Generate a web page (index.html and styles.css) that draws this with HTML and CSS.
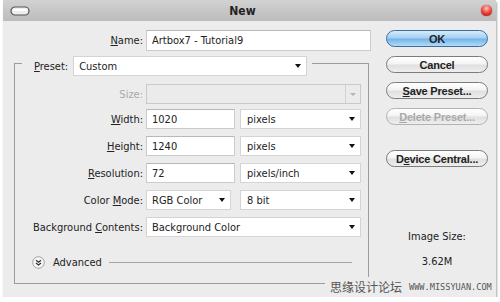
FILE: index.html
```html
<!DOCTYPE html>
<html lang="en">
<head>
  <meta charset="UTF-8">
  <title>New</title>
  <link rel="stylesheet" href="styles.css">
</head>
<body>
  <div class="window">
    <div class="titlebar">
      <svg class="pill" width="20" height="10" viewBox="0 0 20 10">
        <rect x="1" y="1" width="18" height="8" rx="4" fill="#eeeeee" stroke="#555" stroke-width="1.2"/>
        <rect x="3" y="3" width="14" height="2" rx="1" fill="#ffffff"/>
      </svg>
      <div class="title">New</div>
      <span class="close"></span>
    </div>

    <div class="content">
      <div class="main">
        <div class="name-row">
          <label class="lbl name-lbl"><u>N</u>ame:</label>
          <input class="field name-field" type="text" value="Artbox7 - Tutorial9">
        </div>

        <fieldset class="group">
          <legend class="preset">
            <label class="preset-lbl"><u>P</u>reset:</label>
            <div class="select preset-select"><span>Custom</span><i class="arrow"></i></div>
          </legend>

          <div class="row row-size">
            <label class="lbl disabled">Size:</label>
            <div class="select select-off"><span></span><i class="drop"><b></b></i></div>
          </div>
          <div class="row">
            <label class="lbl"><u>W</u>idth:</label>
            <input class="field num" type="text" value="1020">
            <div class="select unit"><span>pixels</span><i class="arrow"></i></div>
          </div>
          <div class="row">
            <label class="lbl"><u>H</u>eight:</label>
            <input class="field num" type="text" value="1240">
            <div class="select unit"><span>pixels</span><i class="arrow"></i></div>
          </div>
          <div class="row">
            <label class="lbl"><u>R</u>esolution:</label>
            <input class="field num" type="text" value="72">
            <div class="select unit"><span>pixels/inch</span><i class="arrow"></i></div>
          </div>
          <div class="row">
            <label class="lbl">Color <u>M</u>ode:</label>
            <div class="select mode"><span>RGB Color</span><i class="arrow"></i></div>
            <div class="select unit"><span>8 bit</span><i class="arrow"></i></div>
          </div>
          <div class="row">
            <label class="lbl">Background <u>C</u>ontents:</label>
            <div class="select wide"><span>Background Color</span><i class="arrow"></i></div>
          </div>

          <div class="advanced">
            <svg class="adv-icon" width="13" height="13" viewBox="0 0 13 13">
              <circle cx="6.5" cy="6.5" r="5.8" fill="#f6f6f6" stroke="#a0a0a0"/>
              <path d="M4 4.2 L6.5 6.2 L9 4.2 M4 7 L6.5 9 L9 7" fill="none" stroke="#333" stroke-width="1.2"/>
            </svg>
            <span class="adv-text">Advanced</span>
            <span class="adv-line"></span>
          </div>
        </fieldset>
      </div>

      <div class="side">
        <button class="btn btn-ok">OK</button>
        <button class="btn">Cancel</button>
        <button class="btn"><u>S</u>ave Preset...</button>
        <button class="btn btn-off"><u>D</u>elete Preset...</button>
        <button class="btn btn-device">D<u>e</u>vice Central...</button>
        <div class="image-size">Image Size:</div>
        <div class="image-value">3.62M</div>
      </div>
    </div>

    <div class="watermark">
      <span class="wm-cn">思缘设计论坛</span>
      <span class="wm-url">WWW.MISSYUAN.COM</span>
    </div>
  </div>
</body>
</html>
```

FILE: styles.css
```css
body {
  margin: 0;
  background: #fff;
  font-family: "DejaVu Sans Condensed", "DejaVu Sans", sans-serif;
  font-stretch: condensed;
  font-size: 11px;
  color: #222;
}
.window {
  position: relative;
  width: 493px;
  height: 297px;
  margin-left: 3px;
  background: #ececec;
  box-shadow: 1px 2px 2px rgba(0, 0, 0, 0.35);
}
.titlebar {
  height: 21px;
  display: flex;
  align-items: center;
  padding: 0 4px 0 7px;
  background: linear-gradient(#d2d2d2, #bcbcbc);
  box-sizing: border-box;
}
.pill {
  display: block;
}
.title {
  flex: 1;
  text-align: center;
  font-weight: bold;
  font-size: 12px;
  padding-right: 26px;
}
.close {
  width: 11px;
  height: 11px;
  border-radius: 50%;
  background: radial-gradient(circle at 50% 30%, #ffc2ba, #ec3a2e 55%, #a3120b);
  box-shadow: 0 0 1px #7a0a05;
}
.content {
  display: flex;
  padding-top: 9px;
}
.main {
  width: 369px;
}
.name-row {
  display: flex;
  align-items: center;
}
.lbl {
  text-align: right;
  margin-right: 3px;
  white-space: nowrap;
}
.name-lbl {
  width: 140px;
}
.disabled {
  color: #a8a8a8;
}
.field {
  box-sizing: border-box;
  height: 20px;
  border: 1px solid #cbcbcb;
  border-top-color: #b8b8b8;
  background: #fff;
  font: inherit;
  color: #222;
  padding: 0 5px;
  margin: 0;
  outline: none;
}
.name-field {
  width: 225px;
  height: 21px;
}
.num {
  width: 89px;
  margin-right: 5px;
}
.group {
  box-sizing: border-box;
  width: 355px;
  margin: 0 0 0 11px;
  padding: 8px 7px 14px 0;
  border: 1px solid #9c9c9c;
  min-width: 0;
}
.preset {
  display: flex;
  align-items: center;
  margin-left: 7px;
  padding: 5px 5px 0 12px;
}
.preset-lbl {
  margin-right: 5px;
}
.select {
  box-sizing: border-box;
  height: 20px;
  display: flex;
  align-items: center;
  justify-content: space-between;
  background: #fff;
  border: 1px solid #d4d4d4;
  padding: 0 5px 0 5px;
}
.preset-select {
  width: 234px;
}
.arrow {
  width: 0;
  height: 0;
  border-left: 3.5px solid transparent;
  border-right: 3.5px solid transparent;
  border-top: 4px solid #111;
}
.row {
  display: flex;
  align-items: center;
  height: 20px;
  margin-bottom: 7px;
}
.row-size {
  margin-bottom: 5px;
}
.row .lbl {
  width: 128px;
}
.select-off {
  width: 215px;
  background: #ebebeb;
  border-color: #c9c9c9;
  padding: 0;
}
.drop {
  width: 14px;
  height: 18px;
  border-left: 1px solid #d2d2d2;
  display: flex;
  align-items: center;
  justify-content: center;
}
.drop b {
  width: 0;
  height: 0;
  border-left: 3px solid transparent;
  border-right: 3px solid transparent;
  border-top: 3px solid #b4b4b4;
}
.unit {
  width: 121px;
  padding-left: 6px;
}
.mode {
  width: 85px;
  margin-right: 9px;
}
.wide {
  width: 215px;
}
.advanced {
  display: flex;
  align-items: center;
  height: 13px;
  margin-top: 19px;
  padding-left: 17px;
}
.adv-icon {
  display: block;
}
.adv-text {
  margin-left: 8px;
}
.adv-line {
  flex: 1;
  height: 1px;
  background: #a4a4a4;
  margin: 0 9px 0 7px;
}
.side {
  width: 102px;
  margin-left: 14px;
  display: flex;
  flex-direction: column;
}
.btn {
  box-sizing: border-box;
  height: 17px;
  margin: 0 0 9px;
  padding: 0;
  border: 1px solid #7c7c7c;
  border-radius: 9px;
  background: linear-gradient(#ffffff, #f4f4f4 45%, #e0e0e0 55%, #eeeeee);
  font-family: "Liberation Sans", sans-serif;
  font-size: 11px;
  font-weight: bold;
  letter-spacing: -0.2px;
  color: #222;
}
.btn-ok {
  border-color: #3f6d9a;
  background: linear-gradient(#d6ebfb, #a5d0f2 45%, #74b5ea 55%, #b3dbf7);
}
.btn-off {
  color: #a9a9a9;
  border-color: #b3b3b3;
}
.btn-device {
  margin-top: 16px;
}
.image-size,
.image-value {
  text-align: center;
  line-height: 14px;
}
.image-size {
  margin-top: 54px;
}
.image-value {
  margin-top: 11px;
}
.watermark {
  position: absolute;
  left: 322px;
  top: 277px;
  width: 171px;
  height: 19px;
  display: flex;
  align-items: center;
  background: #ececec;
  color: #555;
}
.wm-cn {
  font-family: "Noto Sans CJK SC", sans-serif;
  font-size: 12px;
  margin-left: 5px;
}
.wm-url {
  font-family: "DejaVu Sans Mono", monospace;
  font-size: 8.6px;
  margin-left: 7px;
}
```
